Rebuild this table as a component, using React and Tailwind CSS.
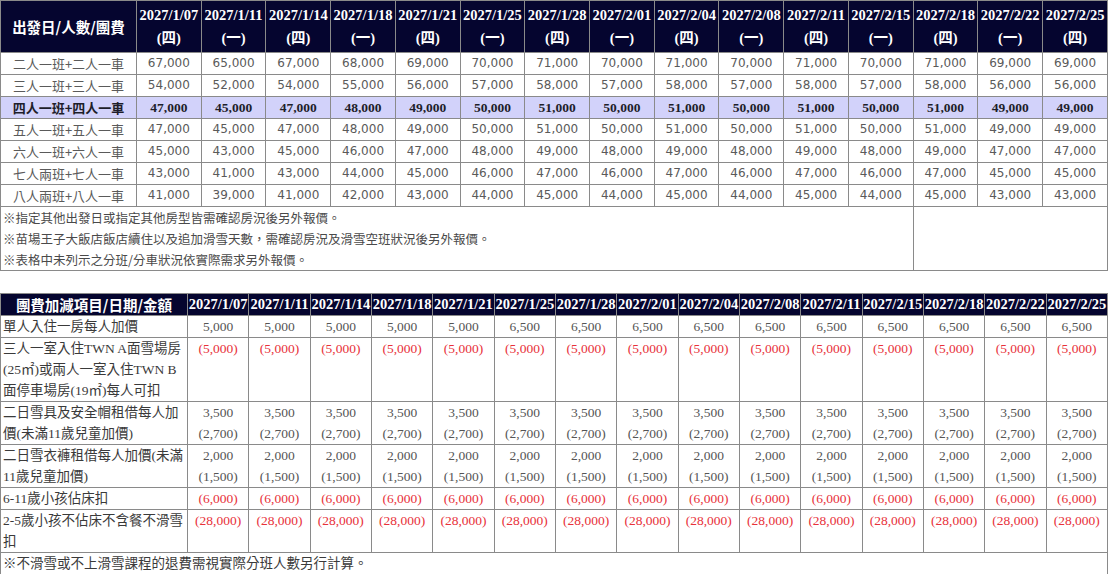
import React from "react";

const dates = [
  ["2027/1/07", "四"], ["2027/1/11", "一"], ["2027/1/14", "四"], ["2027/1/18", "一"],
  ["2027/1/21", "四"], ["2027/1/25", "一"], ["2027/1/28", "四"], ["2027/2/01", "一"],
  ["2027/2/04", "四"], ["2027/2/08", "一"], ["2027/2/11", "四"], ["2027/2/15", "一"],
  ["2027/2/18", "四"], ["2027/2/22", "一"], ["2027/2/25", "四"],
];

const priceRows = [
  { label: "二人一班+二人一車", v: [67, 65, 67, 68, 69, 70, 71, 70, 71, 70, 71, 70, 71, 69, 69] },
  { label: "三人一班+三人一車", v: [54, 52, 54, 55, 56, 57, 58, 57, 58, 57, 58, 57, 58, 56, 56] },
  { label: "四人一班+四人一車", v: [47, 45, 47, 48, 49, 50, 51, 50, 51, 50, 51, 50, 51, 49, 49], hi: true },
  { label: "五人一班+五人一車", v: [47, 45, 47, 48, 49, 50, 51, 50, 51, 50, 51, 50, 51, 49, 49] },
  { label: "六人一班+六人一車", v: [45, 43, 45, 46, 47, 48, 49, 48, 49, 48, 49, 48, 49, 47, 47] },
  { label: "七人兩班+七人一車", v: [43, 41, 43, 44, 45, 46, 47, 46, 47, 46, 47, 46, 47, 45, 45] },
  { label: "八人兩班+八人一車", v: [41, 39, 41, 42, 43, 44, 45, 44, 45, 44, 45, 44, 45, 43, 43] },
];

const notes = [
  "※指定其他出發日或指定其他房型皆需確認房況後另外報價。",
  "※苗場王子大飯店飯店續住以及追加滑雪天數，需確認房況及滑雪空班狀況後另外報價。",
  "※表格中未列示之分班/分車狀況依實際需求另外報價。",
];

const single = ["5,000", "5,000", "5,000", "5,000", "5,000", "6,500", "6,500", "6,500", "6,500", "6,500", "6,500", "6,500", "6,500", "6,500", "6,500"];

const cjk = "font-['Noto_Sans_CJK_TC','Noto_Sans',sans-serif]";
const serif = "font-['Liberation_Serif','Noto_Sans_CJK_TC',serif]";
const td1 = "border border-[#8a8a8a] p-0 text-center leading-[21px]";
const td2 = "border border-[#8a8a8a] px-0 py-0 text-center align-top leading-[21px]";

function PriceTable() {
  return (
    <table className="w-[1108px] table-fixed border-collapse">
      <colgroup>
        <col className="w-[136px]" />
        {dates.map((d) => (
          <col key={d[0]} />
        ))}
      </colgroup>
      <thead>
        <tr className="bg-[#05052f] text-white">
          <th className={`border border-[#8a8a8a] h-[52px] text-[14.5px] font-bold ${cjk}`}>出發日/人數/團費</th>
          {dates.map(([d, w]) => (
            <th key={d} className={`border border-[#8a8a8a] text-[14.5px] font-bold leading-[23px] ${serif}`}>
              {d}
              <br />({w})
            </th>
          ))}
        </tr>
      </thead>
      <tbody>
        {priceRows.map((r) => (
          <tr key={r.label} className={r.hi ? "bg-[#d2d2fa] text-[#1e1e2a] font-bold" : "bg-white text-[#5a5a5a]"}>
            <td className={`${td1} text-[13px] ${cjk}`}>{r.label}</td>
            {r.v.map((n, i) => (
              <td key={i} className={`${td1} ${r.hi ? `text-[13.5px] ${serif}` : "text-[12px] font-['DejaVu_Sans',sans-serif]"}`}>
                {n},000
              </td>
            ))}
          </tr>
        ))}
        <tr className="bg-white">
          <td colSpan={13} className={`border border-[#8a8a8a] px-[2px] text-left text-[12.5px] leading-[21px] text-[#4a4a4a] ${cjk}`}>
            {notes.map((n) => (
              <div key={n}>{n}</div>
            ))}
          </td>
          <td colSpan={3} className="border border-[#8a8a8a]" />
        </tr>
      </tbody>
    </table>
  );
}

function Cells({ vals, red }) {
  return vals.map((v, i) => (
    <td key={i} className={`${td2} ${red ? "text-[#e8313a]" : "text-[#555]"}`}>
      {v}
    </td>
  ));
}

function Pair({ a, b }) {
  return dates.map((d) => (
    <td key={d[0]} className={`${td2} text-[#555]`}>
      {a}
      <br />
      {b}
    </td>
  ));
}

function AddonTable() {
  const fill = (s) => dates.map(() => s);
  const label = `border border-[#8a8a8a] pl-[2px] pr-0 text-left align-top leading-[21px] text-[#3a3a3a] ${serif}`;
  return (
    <table className={`w-[1108px] table-fixed border-collapse text-[13.5px] ${serif}`}>
      <colgroup>
        <col className="w-[187px]" />
        {dates.map((d) => (
          <col key={d[0]} />
        ))}
      </colgroup>
      <thead>
        <tr className="bg-[#05052f] text-white">
          <th className={`border border-[#8a8a8a] h-[22px] text-[14.5px] font-bold leading-[21px] ${cjk}`}>團費加減項目/日期/金額</th>
          {dates.map(([d]) => (
            <th key={d} className="border border-[#8a8a8a] text-[14.5px] font-bold leading-[21px] whitespace-nowrap">
              {d}
            </th>
          ))}
        </tr>
      </thead>
      <tbody className="bg-white">
        <tr>
          <td className={label}>單人入住一房每人加價</td>
          <Cells vals={single} />
        </tr>
        <tr>
          <td className={label}>
            三人一室入住TWN A面雪場房
            <br />
            (25㎡)或兩人一室入住TWN B
            <br />
            面停車場房(19㎡)每人可扣
          </td>
          <Cells vals={fill("(5,000)")} red />
        </tr>
        <tr>
          <td className={label}>
            二日雪具及安全帽租借每人加
            <br />
            價(未滿11歲兒童加價)
          </td>
          <Pair a="3,500" b="(2,700)" />
        </tr>
        <tr>
          <td className={label}>
            二日雪衣褲租借每人加價(未滿
            <br />
            11歲兒童加價)
          </td>
          <Pair a="2,000" b="(1,500)" />
        </tr>
        <tr>
          <td className={label}>6-11歲小孩佔床扣</td>
          <Cells vals={fill("(6,000)")} red />
        </tr>
        <tr>
          <td className={label}>
            2-5歲小孩不佔床不含餐不滑雪
            <br />扣
          </td>
          <Cells vals={fill("(28,000)")} red />
        </tr>
        <tr>
          <td colSpan={16} className={label}>
            ※不滑雪或不上滑雪課程的退費需視實際分班人數另行計算。
          </td>
        </tr>
      </tbody>
    </table>
  );
}

export default function App() {
  return (
    <div className="w-[1108px] h-[574px] overflow-hidden bg-white">
      <PriceTable />
      <div className="h-[22px]" />
      <AddonTable />
    </div>
  );
}
